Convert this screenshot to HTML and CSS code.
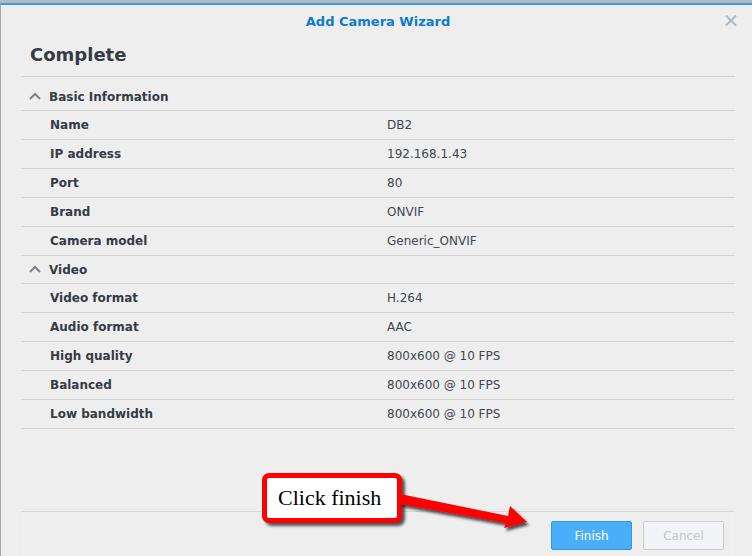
FILE: index.html
```html
<!DOCTYPE html>
<html lang="en">
<head>
    <meta charset="UTF-8">
    <title>Add Camera Wizard</title>
    <link rel="stylesheet" href="styles.css">
</head>
<body>
    <div class="dialog">
        <div class="dialog-header">
            <span class="dialog-title">Add Camera Wizard</span>
            <svg class="close-btn" width="12" height="11" viewBox="0 0 12 11">
                <path d="M1 0.5 L11 10.5 M11 0.5 L1 10.5" stroke="#aeb9c4" stroke-width="2" fill="none"/>
            </svg>
        </div>
        <div class="dialog-body">
            <div class="page-title">Complete</div>

            <div class="section first">
                <div class="section-header">
                    <svg class="chevron" width="12" height="8" viewBox="0 0 12 8">
                        <path d="M1 7 L6 2 L11 7" stroke="#7c838c" stroke-width="2" fill="none"/>
                    </svg>
                    Basic Information
                </div>
                <div class="row"><span class="label">Name</span><span class="value">DB2</span></div>
                <div class="row"><span class="label">IP address</span><span class="value">192.168.1.43</span></div>
                <div class="row"><span class="label">Port</span><span class="value">80</span></div>
                <div class="row"><span class="label">Brand</span><span class="value">ONVIF</span></div>
                <div class="row"><span class="label">Camera model</span><span class="value">Generic_ONVIF</span></div>
            </div>

            <div class="section">
                <div class="section-header">
                    <svg class="chevron" width="12" height="8" viewBox="0 0 12 8">
                        <path d="M1 7 L6 2 L11 7" stroke="#7c838c" stroke-width="2" fill="none"/>
                    </svg>
                    Video
                </div>
                <div class="row"><span class="label">Video format</span><span class="value">H.264</span></div>
                <div class="row"><span class="label">Audio format</span><span class="value">AAC</span></div>
                <div class="row"><span class="label">High quality</span><span class="value">800x600 @ 10 FPS</span></div>
                <div class="row"><span class="label">Balanced</span><span class="value">800x600 @ 10 FPS</span></div>
                <div class="row"><span class="label">Low bandwidth</span><span class="value">800x600 @ 10 FPS</span></div>
            </div>
        </div>
        <div class="dialog-footer">
            <button class="btn btn-primary">Finish</button>
            <button class="btn btn-disabled">Cancel</button>
        </div>
    </div>

    <div class="callout">Click finish</div>
    <svg class="callout-arrow" width="140" height="50" viewBox="0 0 140 50">
        <defs>
            <filter id="shadow" x="-10%" y="-20%" width="130%" height="160%">
                <feDropShadow dx="2" dy="3" stdDeviation="1.5" flood-color="#000" flood-opacity="0.7"/>
            </filter>
        </defs>
        <polygon points="0,2 108,24 110,14 127,30 104,36 106,31 0,12" fill="#ff0000" filter="url(#shadow)"/>
    </svg>
</body>
</html>
```

FILE: styles.css
```css
body {
    margin: 0;
    padding: 0;
    background: #b9b9b9;
    font-family: "DejaVu Sans", Verdana, sans-serif;
    font-size: 12px;
    height: 556px;
    overflow: hidden;
    position: relative;
}
.dialog {
    margin-top: 3px;
    height: 551px;
    border-top: 2px solid #2d9ff5;
    border-left: 1px solid #a9a9a9;
    background: #eeeeee;
    display: flex;
    flex-direction: column;
    padding: 0 17px 0 20px;
}
.dialog-header {
    height: 33px;
    display: flex;
    justify-content: center;
    align-items: center;
    position: relative;
}
.dialog-title {
    font-size: 13px;
    font-weight: bold;
    color: #0f7cc7;
}
.close-btn {
    position: absolute;
    right: -2px;
    top: 10px;
}
.dialog-body {
    flex: 1;
}
.page-title {
    font-size: 18px;
    font-weight: bold;
    color: #343b45;
    line-height: 34px;
    padding: 0 0 4px 9px;
    border-bottom: 1px solid #cfcfcf;
}
.section.first {
    margin-top: 6px;
}
.section-header {
    height: 27px;
    display: flex;
    align-items: center;
    padding-left: 8px;
    font-weight: bold;
    color: #343b45;
    border-bottom: 1px solid #d3d3d3;
}
.chevron {
    margin-right: 8px;
    margin-top: -1px;
}
.row {
    height: 28px;
    display: flex;
    align-items: center;
    padding-left: 29px;
    border-bottom: 1px solid #d3d3d3;
}
.label {
    width: 337px;
    font-weight: bold;
    color: #343b45;
}
.value {
    color: #3e4650;
}
.dialog-footer {
    border-top: 1px solid #d6d6d6;
    box-shadow: 0 1px 1px #e2e2e2;
    height: 45px;
    display: flex;
    justify-content: flex-end;
    align-items: flex-start;
    padding: 9px 11px 0 0;
    gap: 11px;
    box-sizing: border-box;
}
.btn {
    width: 81px;
    height: 29px;
    font-family: "DejaVu Sans", Verdana, sans-serif;
    font-size: 12px;
    border-radius: 2px;
    padding: 0;
}
.btn-primary {
    background: #4aaefa;
    border: 1px solid #3597e4;
    color: #ffffff;
}
.btn-disabled {
    background: #f3f4f8;
    border: 1px solid #cbcbcb;
    color: #c3c6ca;
}
.callout {
    position: absolute;
    left: 262px;
    top: 473px;
    width: 119px;
    height: 40px;
    border: 5px solid #ff0000;
    border-radius: 7px;
    background: #ffffff;
    box-shadow: 3px 3px 3px rgba(0, 0, 0, 0.65);
    font-family: "Liberation Serif", "Times New Roman", serif;
    font-size: 22px;
    color: #000000;
    display: flex;
    align-items: center;
    padding-left: 11px;
}
.callout-arrow {
    position: absolute;
    left: 400px;
    top: 492px;
}
```
